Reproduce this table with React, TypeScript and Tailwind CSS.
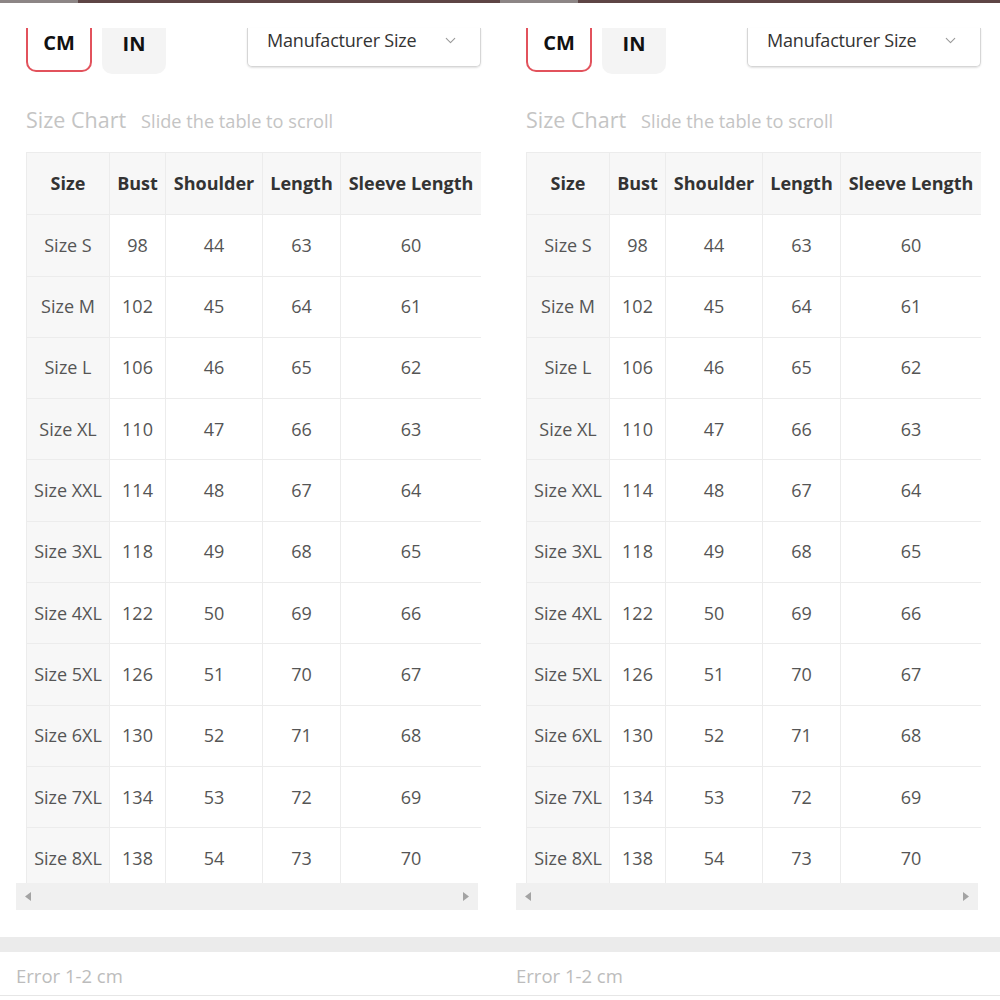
import { ChevronDown } from "lucide-react";

const rows = [
  ["Size S", "98", "44", "63", "60"],
  ["Size M", "102", "45", "64", "61"],
  ["Size L", "106", "46", "65", "62"],
  ["Size XL", "110", "47", "66", "63"],
  ["Size XXL", "114", "48", "67", "64"],
  ["Size 3XL", "118", "49", "68", "65"],
  ["Size 4XL", "122", "50", "69", "66"],
  ["Size 5XL", "126", "51", "70", "67"],
  ["Size 6XL", "130", "52", "71", "68"],
  ["Size 7XL", "134", "53", "72", "69"],
  ["Size 8XL", "138", "54", "73", "70"],
];

const headers = ["Size", "Bust", "Shoulder", "Length", "Sleeve Length"];
const widths = ["w-[83px]", "w-[56px]", "w-[97px]", "w-[78px]", "w-[141px]"];

function SizePanel() {
  return (
    <div className="w-[500px] flex flex-col">
      <div className="h-[3px] flex">
        <div className="w-[78px] bg-[#8c8585]" />
        <div className="flex-1 bg-[#5e4545]" />
      </div>

      {/* unit toggle + dropdown */}
      <div className="mt-[25px] flex items-start pl-[26px]">
        <div className="w-[66px] h-[44px] border-2 border-t-0 border-[#e2525c] rounded-b-[10px] flex items-center justify-center font-bold text-[20px] text-[#111] pb-[12px]">
          CM
        </div>
        <div className="ml-[10px] w-[64px] h-[46px] bg-[#f4f4f4] rounded-b-[10px] flex items-center justify-center font-bold text-[20px] text-[#111] pb-[14px]">
          IN
        </div>
        <div className="ml-[81px] w-[234px] h-[39px] border border-t-0 border-[#d6d6d6] rounded-b-[5px] shadow-[0_1px_2px_rgba(0,0,0,0.12)] flex items-center pl-[19px] pr-[21px] pb-[14px]">
          <span className="text-[18px] text-[#333] tracking-[-0.2px]">Manufacturer Size</span>
          <ChevronDown className="ml-auto text-[#999]" size={17} strokeWidth={1.5} />
        </div>
      </div>

      <div className="mt-[30px] pl-[26px] flex items-baseline gap-[15px] text-[#c4c4c4]">
        <span className="text-[21.5px]">Size Chart</span>
        <span className="text-[18.2px]">Slide the table to scroll</span>
      </div>

      <div className="mt-[16px] ml-[26px] w-[455px] h-[731px] overflow-hidden">
        <table className="border-collapse table-fixed w-[455px] text-center">
          <thead>
            <tr className="h-[62px] bg-[#f7f7f7]">
              {headers.map((h, i) => (
                <th
                  key={h}
                  className={`${widths[i]} border border-[#ececec] font-bold text-[18px] text-[#333] p-0 whitespace-nowrap`}
                >
                  {h}
                </th>
              ))}
            </tr>
          </thead>
          <tbody>
            {rows.map((r) => (
              <tr key={r[0]} className="h-[61.3px]">
                {r.map((c, i) => (
                  <td
                    key={i}
                    className={`border border-[#ececec] text-[18px] text-[#555] p-0 whitespace-nowrap ${
                      i === 0 ? "bg-[#f7f7f7]" : "bg-white"
                    }`}
                  >
                    {c}
                  </td>
                ))}
              </tr>
            ))}
          </tbody>
        </table>
      </div>

      {/* horizontal scrollbar */}
      <div className="ml-[16px] w-[462px] h-[27px] bg-[#f0f0f0] flex items-center justify-between px-[9px]">
        <svg width="6" height="9" viewBox="0 0 6 9">
          <path d="M6 0 L0 4.5 L6 9 Z" fill="#a3a3a3" />
        </svg>
        <svg width="6" height="9" viewBox="0 0 6 9">
          <path d="M0 0 L6 4.5 L0 9 Z" fill="#a3a3a3" />
        </svg>
      </div>

      <div className="mt-[27px] h-[15px] bg-[#ebebeb]" />
      <div className="h-[44px] border-b border-[#e6e6e6] flex items-center pl-[16px] pt-[5px] text-[18.5px] text-[#bcbcbc]">
        Error 1-2 cm
      </div>
    </div>
  );
}

export default function App() {
  return (
    <div
      className="w-[1000px] h-[1000px] overflow-hidden bg-white flex"
      style={{ fontFamily: '"Open Sans", "Noto Sans", sans-serif' }}
    >
      <SizePanel />
      <SizePanel />
    </div>
  );
}
